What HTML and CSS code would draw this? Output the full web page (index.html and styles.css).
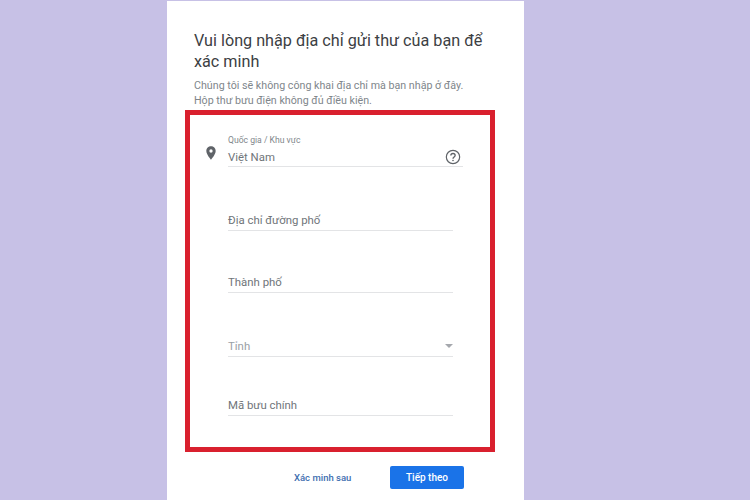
FILE: index.html
```html
<!DOCTYPE html>
<html lang="vi">
<head>
<meta charset="utf-8">
<title>Xác minh</title>
<link rel="stylesheet" href="styles.css">
</head>
<body>
<main class="card">
  <h1 class="title">Vui lòng nhập địa chỉ gửi thư của bạn để xác minh</h1>
  <p class="desc">Chúng tôi sẽ không công khai địa chỉ mà bạn nhập ở đây. Hộp thư bưu điện không đủ điều kiện.</p>
  <section class="box">
    <div class="row">
      <svg class="pin" viewBox="0 0 24 24" width="16" height="16"><path fill="#5f6368" d="M12 2C8.13 2 5 5.13 5 9c0 5.25 7 13 7 13s7-7.75 7-13c0-3.87-3.13-7-7-7zm0 9.5a2.5 2.5 0 1 1 0-5 2.5 2.5 0 0 1 0 5z"/></svg>
      <div class="field first">
        <span class="small">Quốc gia / Khu vực</span>
        <div class="line wide"><span class="val">Việt Nam</span>
          <svg class="help" viewBox="0 0 24 24" width="16" height="16"><circle cx="12" cy="12" r="10" fill="none" stroke="#5f6368" stroke-width="1.8"/><path fill="none" stroke="#5f6368" stroke-width="2" d="M8.8 9.8c0-1.9 1.4-3.1 3.2-3.1s3.2 1.2 3.2 2.9c0 2.3-3.2 2.4-3.2 4.9"/><circle cx="12" cy="17.3" r="1.2" fill="#5f6368"/></svg>
        </div>
      </div>
    </div>
    <div class="field street"><div class="line"><span class="val">Địa chỉ đường phố</span></div></div>
    <div class="field city"><div class="line"><span class="val">Thành phố</span></div></div>
    <div class="field prov"><div class="line"><span class="val light">Tỉnh</span><span class="caret"></span></div></div>
    <div class="field zip"><div class="line"><span class="val">Mã bưu chính</span></div></div>
  </section>
  <footer class="actions">
    <a class="later">Xác minh sau</a>
    <button class="next">Tiếp theo</button>
  </footer>
</main>
</body>
</html>
```
FILE: styles.css
```css
* { box-sizing: border-box; }
html, body { margin: 0; height: 500px; overflow: hidden; }
body { background: #c7c1e6; font-family: Roboto, "Liberation Sans", sans-serif; }
.card { width: 357px; height: 499px; margin: 1px 0 0 167px; background: #fff; padding: 29px 0 0 18px; }
.title { margin: 0 0 0 9px; width: 300px; font-size: 16.2px; line-height: 21px; font-weight: 400; color: #3c4043; }
.desc { margin: 6px 0 0 9px; width: 272px; font-size: 10.7px; line-height: 15px; color: #80868b; }
.box { width: 310px; height: 342px; margin-top: 2px; border: 5px solid #d9202e; padding: 19px 0 0 17px; }
.row { display: flex; align-items: flex-start; }
.pin { margin: 11px 0 0 -4px; flex: none; }
.field { width: 225px; margin-left: 21px; }
.row .field { margin-left: 9px; }
.small { display: block; margin-top: 1px; font-size: 8.6px; line-height: 10px; color: #80868b; }
.line { display: flex; align-items: center; justify-content: space-between; border-bottom: 1px solid #e3e4e6; height: 22px; }
.line.wide { width: 235px; height: 22px; padding-top: 3px; }
.val { font-size: 11.4px; color: #70757a; }
.light { color: #9aa0a6; }
.help { margin-right: 2px; }
.caret { width: 0; height: 0; border: 4px solid transparent; border-top: 4px solid #a5a8ad; border-bottom: 0; }
.street { margin-top: 42px; }
.city { margin-top: 40px; }
.prov { margin-top: 42px; }
.zip { margin-top: 37px; }
.actions { display: flex; align-items: center; margin-top: 14px; padding-left: 109px; }
.later { width: 95px; font-size: 9.5px; font-weight: 500; color: #3f6fb0; }
.next { width: 74px; height: 23px; margin-left: 1px; border: 0; border-radius: 2px; background: #1a73e8; color: #fff; font: 500 10px Roboto, "Liberation Sans", sans-serif; }
```
